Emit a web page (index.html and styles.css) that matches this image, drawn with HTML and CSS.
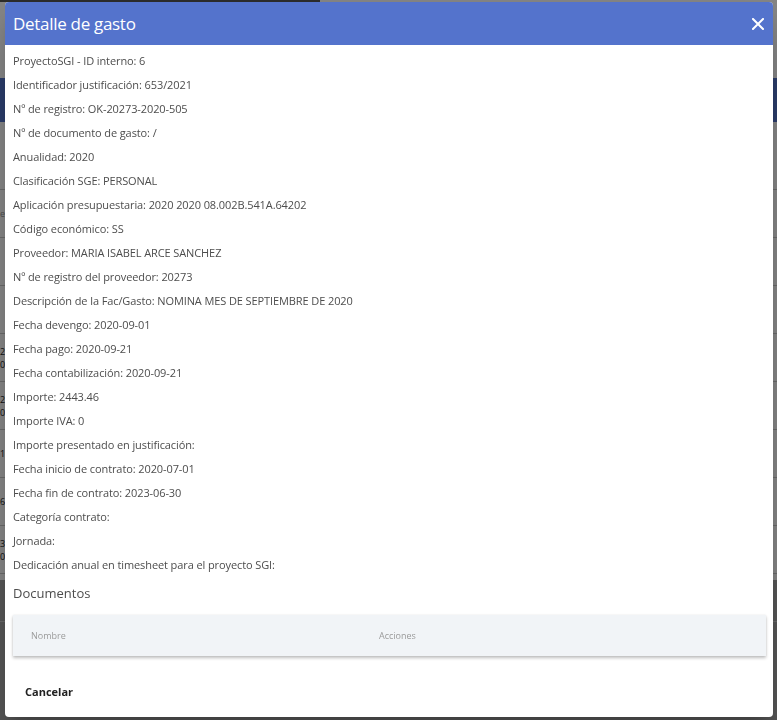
FILE: index.html
```html
<!DOCTYPE html>
<html lang="es">
<head>
<meta charset="utf-8">
<title>Detalle de gasto</title>
<link rel="stylesheet" href="styles.css">
</head>
<body>
<div class="page">
  <div class="page-top">
    <div class="crumb-bar"></div>
  </div>
  <div class="page-bar"></div>
  <div class="page-rows">
    <div class="row"></div>
    <div class="row"><span class="light">e</span></div>
    <div class="row"></div>
    <div class="row"></div>
    <div class="row"><span>2<br>0</span></div>
    <div class="row"><span>2<br>0</span></div>
    <div class="row"><span>1</span></div>
    <div class="row"><span>6</span></div>
    <div class="row"><span>3<br>0</span></div>
    <div class="row"></div>
  </div>
</div>
<div class="overlay"></div>
<div class="dialog">
  <div class="dialog-header">
    <h1 class="dialog-title">Detalle de gasto</h1>
    <button class="close" aria-label="Cerrar">
      <svg width="12" height="12" viewBox="0 0 12 12"><path d="M1 1 L11 11 M11 1 L1 11" stroke="#fff" stroke-width="2" stroke-linecap="square"/></svg>
    </button>
  </div>
  <div class="dialog-body">
    <div class="field">ProyectoSGI - ID interno: 6</div>
    <div class="field">Identificador justificación: 653/2021</div>
    <div class="field">Nº de registro: OK-20273-2020-505</div>
    <div class="field">Nº de documento de gasto: /</div>
    <div class="field">Anualidad: 2020</div>
    <div class="field">Clasificación SGE: PERSONAL</div>
    <div class="field">Aplicación presupuestaria: 2020 2020 08.002B.541A.64202</div>
    <div class="field">Código económico: SS</div>
    <div class="field">Proveedor: MARIA ISABEL ARCE SANCHEZ</div>
    <div class="field">Nº de registro del proveedor: 20273</div>
    <div class="field">Descripción de la Fac/Gasto: NOMINA MES DE SEPTIEMBRE DE 2020</div>
    <div class="field">Fecha devengo: 2020-09-01</div>
    <div class="field">Fecha pago: 2020-09-21</div>
    <div class="field">Fecha contabilización: 2020-09-21</div>
    <div class="field">Importe: 2443.46</div>
    <div class="field">Importe IVA: 0</div>
    <div class="field">Importe presentado en justificación:</div>
    <div class="field">Fecha inicio de contrato: 2020-07-01</div>
    <div class="field">Fecha fin de contrato: 2023-06-30</div>
    <div class="field">Categoría contrato:</div>
    <div class="field">Jornada:</div>
    <div class="field">Dedicación anual en timesheet para el proyecto SGI:</div>
    <h2 class="section-title">Documentos</h2>
    <div class="table">
      <div class="th name">Nombre</div>
      <div class="th">Acciones</div>
    </div>
  </div>
  <div class="dialog-actions">
    <button class="btn-cancel">Cancelar</button>
  </div>
</div>
</body>
</html>
```
FILE: styles.css
```css
html, body {
  margin: 0;
  padding: 0;
}
body {
  width: 777px;
  height: 720px;
  overflow: hidden;
  background: #a6a6a6;
  font-family: "Open Sans", "Noto Sans", sans-serif;
}
.page {
  background: #fff;
  height: 580px;
  color: #333;
  font-size: 9px;
}
.page-top {
  height: 78px;
}
.crumb-bar {
  width: 320px;
  height: 2px;
  background: #555;
}
.page-bar {
  height: 44px;
  background: #5473cc;
}
.page-rows {
  padding-top: 20px;
}
.row {
  height: 47px;
  border-bottom: 1px solid #ccc;
  display: flex;
  flex-direction: column;
  justify-content: center;
  color: #222;
  line-height: 13px;
}
.row .light {
  color: #999;
}
.overlay {
  position: fixed;
  inset: 0;
  background: rgba(0, 0, 0, 0.48);
}
.dialog {
  position: absolute;
  left: 5px;
  top: 2px;
  width: 768px;
  height: 715px;
  background: #fff;
  border-radius: 4px;
  overflow: hidden;
  display: flex;
  flex-direction: column;
  box-shadow: 0 11px 15px -7px rgba(0,0,0,.2), 0 24px 38px 3px rgba(0,0,0,.14);
}
.dialog-header {
  height: 43px;
  background: #5473cc;
  display: flex;
  align-items: center;
  justify-content: space-between;
  padding: 0 8px;
  flex: none;
}
.dialog-title {
  margin: 0;
  color: #fff;
  font-size: 17px;
  font-weight: 500;
  letter-spacing: -0.3px;
}
.close {
  background: none;
  border: 0;
  padding: 0;
  width: 12px;
  height: 12px;
  margin-right: 1px;
  display: flex;
}
.dialog-body {
  padding: 4px 7px 0 8px;
  color: #4d4d4d;
  font-size: 11px;
  flex: 1;
}
.field {
  line-height: 24px;
  letter-spacing: -0.1px;
}
.section-title {
  margin: 6px 0 0 0;
  font-size: 13px;
  font-weight: 400;
  color: #4d4d4d;
  line-height: 20px;
}
.table {
  margin-top: 12px;
  height: 41px;
  background: #f1f4f7;
  display: flex;
  align-items: center;
  box-shadow: 0 2px 3px rgba(0,0,0,.25), 0 0 2px rgba(0,0,0,.08);
  color: #9a9a9a;
  font-size: 9px;
}
.th {
  padding-left: 18px;
}
.th.name {
  width: 330px;
}
.dialog-actions {
  flex: none;
  height: 56px;
  display: flex;
  align-items: flex-start;
  padding: 23px 20px 0 20px;
  box-sizing: border-box;
}
.btn-cancel {
  background: none;
  border: 0;
  font-family: inherit;
  font-size: 11px;
  font-weight: 700;
  color: #222;
  padding: 0;
}
```
